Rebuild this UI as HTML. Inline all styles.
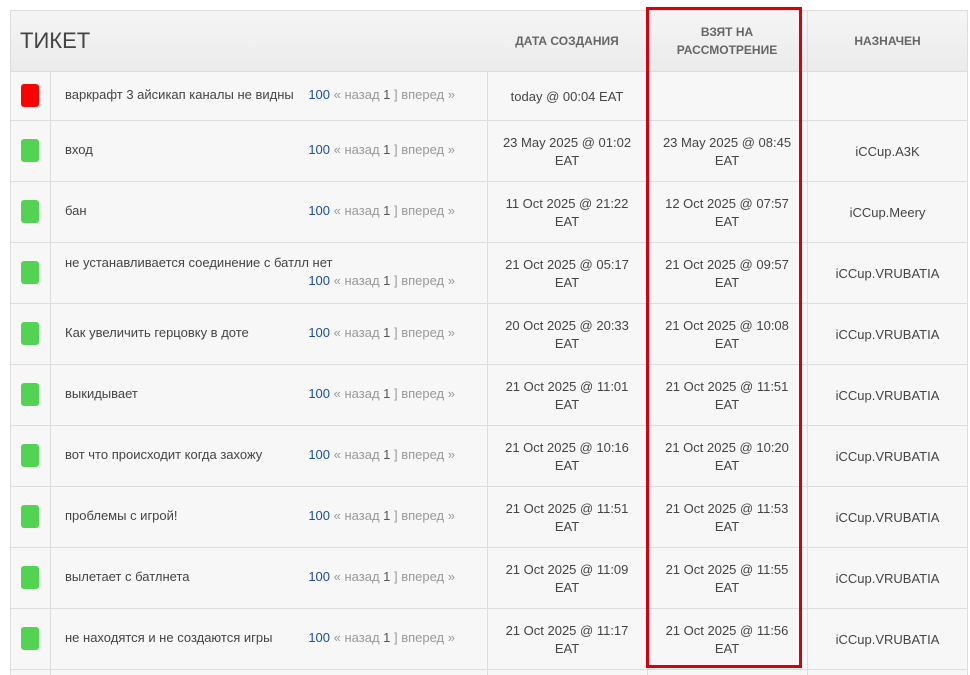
<!DOCTYPE html>
<html><head><meta charset="utf-8"><style>
*{margin:0;padding:0;box-sizing:border-box}
html,body{width:970px;height:675px;overflow:hidden}
body{background:#fff;position:relative;font-family:"Liberation Sans","Noto Sans CJK SC",sans-serif;color:#444;font-size:13px}
.a{position:absolute}
.hdr{left:10px;top:10px;width:958px;height:62px;background:linear-gradient(#f5f5f5,#ebebeb);border:1px solid #ddd}
.th{position:absolute;top:10px;height:62px;display:flex;align-items:center;justify-content:center;text-align:center;font-weight:bold;font-size:12px;color:#666;line-height:18px}
.row{position:absolute;left:10px;width:958px;height:62px;background:#f7f7f7;border-left:1px solid #ddd;border-right:1px solid #ddd;border-top:1px solid #ddd}
.c{position:absolute;top:0;bottom:0;width:1px;background:#ddd}
.sq{position:absolute;left:10px;top:18px;width:18px;height:23px;border-radius:3px;background:#52d352}
.t{position:absolute;left:54px;top:20px;line-height:18px;white-space:nowrap}
.pg{position:absolute;left:234px;width:210px;top:20px;line-height:18px;text-align:right;color:#999;white-space:nowrap}
.pg b{font-weight:normal;color:#1a4fa0}
.pg i{font-style:normal;color:#555}
.d{position:absolute;top:0;bottom:0;text-align:center;line-height:18px;display:flex;align-items:center;justify-content:center}
.d1{left:476px;width:160px}.d2{left:636px;width:160px}.d3{left:796px;width:161px}
</style></head><body>
<div class="a hdr"></div>
<div class="a" style="left:20px;top:28px;font-size:22px;color:#444">ТИКЕТ</div>
<div class="th" style="left:487px;width:160px">ДАТА СОЗДАНИЯ</div>
<div class="th" style="left:647px;width:160px">ВЗЯТ НА<br>РАССМОТРЕНИЕ</div>
<div class="th" style="left:807px;width:161px">НАЗНАЧЕН</div>
<div class="a" style="left:807px;top:10px;width:1px;height:62px;background:#ddd"></div>

<div class="row" style="top:71px;height:50px"><div class="c" style="left:39px"></div><div class="c" style="left:476px"></div><div class="c" style="left:636px"></div><div class="c" style="left:796px"></div>
<div class="sq" style="top:12px;background:#f00"></div><div class="t" style="top:14px">варкрафт 3 айсикап каналы не видны</div><div class="pg" style="top:14px"><b>100</b> « назад <i>1</i> ] вперед »</div>
<div class="d d1">today @ 00:04 EAT</div></div>

<div class="row" style="top:120px"><div class="c" style="left:39px"></div><div class="c" style="left:476px"></div><div class="c" style="left:636px"></div><div class="c" style="left:796px"></div>
<div class="sq"></div><div class="t">вход</div><div class="pg"><b>100</b> « назад <i>1</i> ] вперед »</div>
<div class="d d1">23 May 2025 @ 01:02<br>EAT</div><div class="d d2">23 May 2025 @ 08:45<br>EAT</div><div class="d d3">iCCup.A3K</div></div>

<div class="row" style="top:181px"><div class="c" style="left:39px"></div><div class="c" style="left:476px"></div><div class="c" style="left:636px"></div><div class="c" style="left:796px"></div>
<div class="sq"></div><div class="t">бан</div><div class="pg"><b>100</b> « назад <i>1</i> ] вперед »</div>
<div class="d d1">11 Oct 2025 @ 21:22<br>EAT</div><div class="d d2">12 Oct 2025 @ 07:57<br>EAT</div><div class="d d3">iCCup.Meery</div></div>

<div class="row" style="top:242px"><div class="c" style="left:39px"></div><div class="c" style="left:476px"></div><div class="c" style="left:636px"></div><div class="c" style="left:796px"></div>
<div class="sq"></div><div class="t" style="top:11px">не устанавливается соединение с батлл нет</div><div class="pg" style="top:29px"><b>100</b> « назад <i>1</i> ] вперед »</div>
<div class="d d1">21 Oct 2025 @ 05:17<br>EAT</div><div class="d d2">21 Oct 2025 @ 09:57<br>EAT</div><div class="d d3">iCCup.VRUBATIA</div></div>

<div class="row" style="top:303px"><div class="c" style="left:39px"></div><div class="c" style="left:476px"></div><div class="c" style="left:636px"></div><div class="c" style="left:796px"></div>
<div class="sq"></div><div class="t">Как увеличить герцовку в доте</div><div class="pg"><b>100</b> « назад <i>1</i> ] вперед »</div>
<div class="d d1">20 Oct 2025 @ 20:33<br>EAT</div><div class="d d2">21 Oct 2025 @ 10:08<br>EAT</div><div class="d d3">iCCup.VRUBATIA</div></div>

<div class="row" style="top:364px"><div class="c" style="left:39px"></div><div class="c" style="left:476px"></div><div class="c" style="left:636px"></div><div class="c" style="left:796px"></div>
<div class="sq"></div><div class="t">выкидывает</div><div class="pg"><b>100</b> « назад <i>1</i> ] вперед »</div>
<div class="d d1">21 Oct 2025 @ 11:01<br>EAT</div><div class="d d2">21 Oct 2025 @ 11:51<br>EAT</div><div class="d d3">iCCup.VRUBATIA</div></div>

<div class="row" style="top:425px"><div class="c" style="left:39px"></div><div class="c" style="left:476px"></div><div class="c" style="left:636px"></div><div class="c" style="left:796px"></div>
<div class="sq"></div><div class="t">вот что происходит когда захожу</div><div class="pg"><b>100</b> « назад <i>1</i> ] вперед »</div>
<div class="d d1">21 Oct 2025 @ 10:16<br>EAT</div><div class="d d2">21 Oct 2025 @ 10:20<br>EAT</div><div class="d d3">iCCup.VRUBATIA</div></div>

<div class="row" style="top:486px"><div class="c" style="left:39px"></div><div class="c" style="left:476px"></div><div class="c" style="left:636px"></div><div class="c" style="left:796px"></div>
<div class="sq"></div><div class="t">проблемы с игрой!</div><div class="pg"><b>100</b> « назад <i>1</i> ] вперед »</div>
<div class="d d1">21 Oct 2025 @ 11:51<br>EAT</div><div class="d d2">21 Oct 2025 @ 11:53<br>EAT</div><div class="d d3">iCCup.VRUBATIA</div></div>

<div class="row" style="top:547px"><div class="c" style="left:39px"></div><div class="c" style="left:476px"></div><div class="c" style="left:636px"></div><div class="c" style="left:796px"></div>
<div class="sq"></div><div class="t">вылетает с батлнета</div><div class="pg"><b>100</b> « назад <i>1</i> ] вперед »</div>
<div class="d d1">21 Oct 2025 @ 11:09<br>EAT</div><div class="d d2">21 Oct 2025 @ 11:55<br>EAT</div><div class="d d3">iCCup.VRUBATIA</div></div>

<div class="row" style="top:608px"><div class="c" style="left:39px"></div><div class="c" style="left:476px"></div><div class="c" style="left:636px"></div><div class="c" style="left:796px"></div>
<div class="sq"></div><div class="t">не находятся и не создаются игры</div><div class="pg"><b>100</b> « назад <i>1</i> ] вперед »</div>
<div class="d d1">21 Oct 2025 @ 11:17<br>EAT</div><div class="d d2">21 Oct 2025 @ 11:56<br>EAT</div><div class="d d3">iCCup.VRUBATIA</div></div>

<div class="row" style="top:669px;height:6px"><div class="c" style="left:39px"></div><div class="c" style="left:476px"></div><div class="c" style="left:636px"></div><div class="c" style="left:796px"></div></div>

<div class="a" style="left:646px;top:7px;width:156px;height:661px;border:3px solid #d6000f"></div>
</body></html>
